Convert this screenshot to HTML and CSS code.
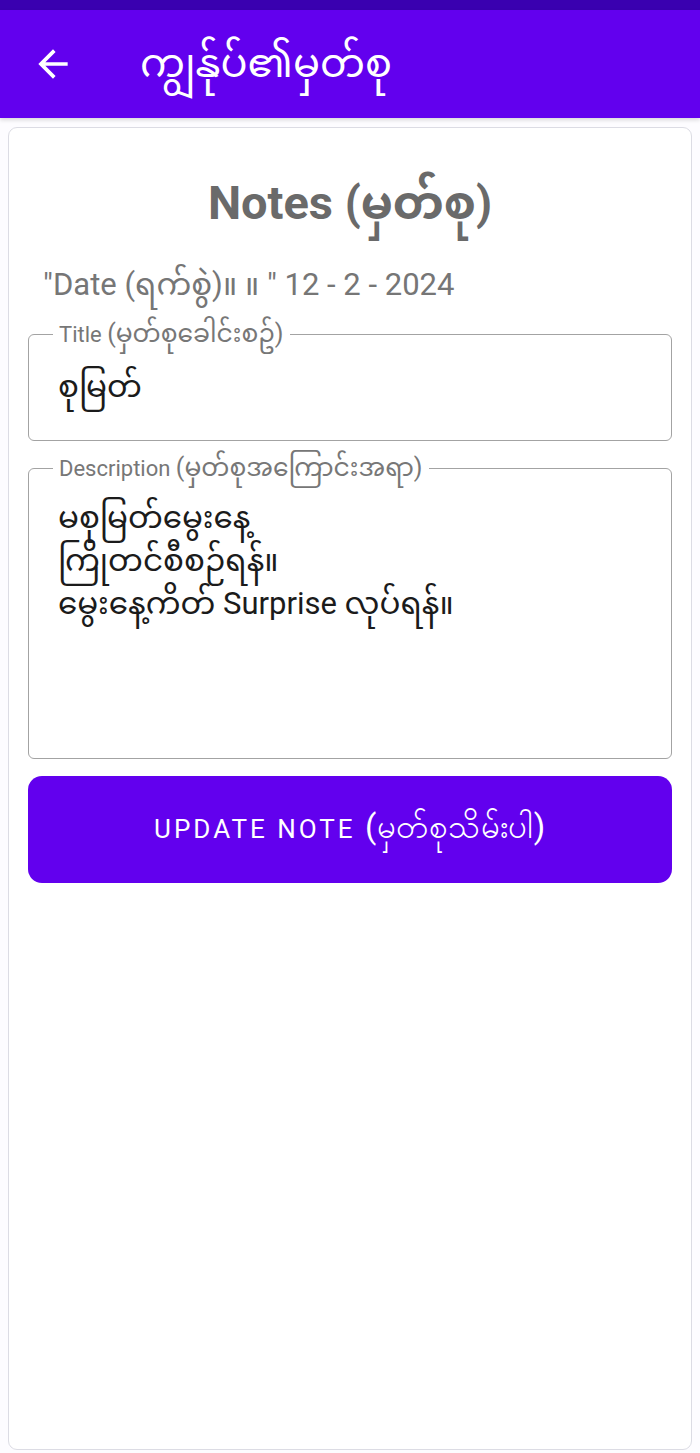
FILE: index.html
```html
<!DOCTYPE html>
<html lang="my">
<head>
<meta charset="utf-8">
<title>Notes</title>
<link rel="stylesheet" href="styles.css">
</head>
<body>
<div class="status"></div>
<header class="appbar">
  <svg class="back" width="44" height="44" viewBox="0 0 24 24"><path d="M20 11H7.83l5.59-5.59L12 4l-8 8 8 8 1.41-1.41L7.83 13H20v-2z" fill="#fff"/></svg>
  <h1 class="apptitle">ကျွန်ုပ်၏မှတ်စု</h1>
</header>
<main class="card">
  <h2 class="heading">Notes <span class="my-h">(မှတ်စု)</span></h2>
  <p class="date">"Date (ရက်စွဲ)။ ။ " 12 - 2 - 2024</p>
  <div class="field field-title">
    <span class="label">Title <span class="my-l">(မှတ်စုခေါင်းစဥ်)</span></span>
    <div class="value">စုမြတ်</div>
  </div>
  <div class="field field-desc">
    <span class="label">Description <span class="my-l">(မှတ်စုအကြောင်းအရာ)</span></span>
    <div class="value">မစုမြတ်မွေးနေ့<br>ကြိုတင်စီစဉ်ရန်။<br>မွေးနေ့ကိတ် Surprise လုပ်ရန်။</div>
  </div>
  <button class="btn">UPDATE NOTE <span class="my-b">(မှတ်စုသိမ်းပါ)</span></button>
</main>
</body>
</html>
```
FILE: styles.css
```css
* { box-sizing: border-box; }
html, body { margin: 0; padding: 0; }
body {
  width: 700px;
  height: 1453px;
  background: #fdfcff;
  font-family: Roboto, "Noto Sans", "Noto Sans Myanmar", sans-serif;
  overflow: hidden;
}
.status { height: 10px; background: #3a00b0; }
.appbar {
  height: 108px;
  background: #6200ee;
  display: flex;
  align-items: center;
  padding-left: 31px;
  box-shadow: 0 2px 4px rgba(0,0,0,0.15);
}
.back { margin-right: 65px; }
.apptitle {
  margin: 0;
  color: #fff;
  font-weight: 400;
  font-size: 40px;
  line-height: 56px;
}
.card {
  margin: 9px 8px 0 8px;
  height: 1323px;
  border: 1px solid #dcdce4;
  border-radius: 9px;
  background: #fff;
  padding: 0 19px;
}
.heading {
  margin: 47px 0 0;
  text-align: center;
  color: #6a6a6a;
  font-size: 47px;
  font-weight: 700;
  line-height: 56px;
}
.my-h { font-size: 46px; }
.date {
  margin: 34px 0 0 15px;
  color: #767676;
  font-size: 31px;
  line-height: 40px;
}
.field {
  position: relative;
  border: 1.5px solid #a3a3a3;
  border-radius: 6px;
  padding: 0 29px;
}
.field-title { margin-top: 29px; height: 107px; padding-top: 29px; }
.field-desc { margin-top: 27px; height: 291px; padding-top: 27px; }
.label {
  position: absolute;
  left: 24px;
  top: -15px;
  padding: 0 6px;
  background: #fff;
  color: #777;
  font-size: 22px;
  line-height: 28px;
  white-space: nowrap;
}
.my-l { font-size: 25px; }
.value {
  color: #1b1b1b;
  font-size: 31px;
  line-height: 46px;
}
.field-desc .value { line-height: 43px; }
.btn {
  display: block;
  width: 100%;
  margin-top: 17px;
  height: 107px;
  border: none;
  border-radius: 14px;
  background: #6200ee;
  color: #fff;
  font-family: Roboto, "Noto Sans", sans-serif;
  font-size: 26px;
  letter-spacing: 3px;
}
.my-b { font-size: 33px; letter-spacing: 0.5px; }
```
